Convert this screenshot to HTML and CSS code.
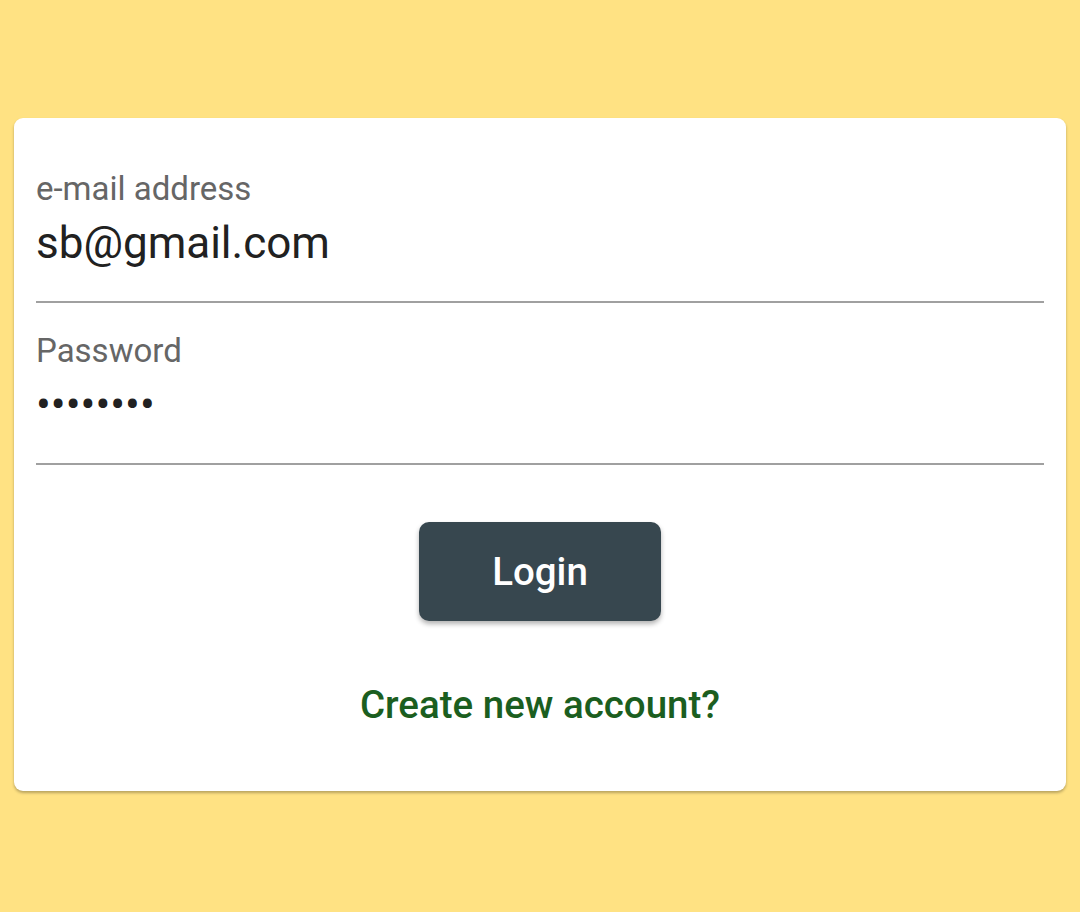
FILE: index.html
```html
<!DOCTYPE html>
<html lang="en">
<head>
<meta charset="utf-8">
<title>Login</title>
<link rel="stylesheet" href="styles.css">
</head>
<body>
<main class="card">
  <label class="field">
    <span class="field-label">e-mail address</span>
    <input class="field-input" type="email" value="sb@gmail.com">
  </label>
  <label class="field">
    <span class="field-label">Password</span>
    <input class="field-input password" type="password" value="password">
  </label>
  <div class="actions">
    <button class="login-btn" type="button">Login</button>
    <a class="create-link" href="#">Create new account?</a>
  </div>
</main>
</body>
</html>
```
FILE: styles.css
```css
html, body {
  margin: 0;
  padding: 0;
}
body {
  background: #FFE283;
  font-family: Roboto, "Noto Sans", sans-serif;
  padding: 118px 14px 0;
  min-height: 912px;
  box-sizing: border-box;
}
.card {
  background: #ffffff;
  border-radius: 9px;
  box-shadow: 0 2px 3px rgba(0, 0, 0, 0.28);
  padding: 23px 22px 62px;
  display: flex;
  flex-direction: column;
}
.field {
  display: flex;
  flex-direction: column;
  padding-top: 28px;
  padding-bottom: 24px;
  border-bottom: 2px solid #a0a0a0;
}
.field-label {
  font-size: 33px;
  line-height: 40px;
  color: #666666;
}
.field-input {
  font-family: Roboto, "Noto Sans", sans-serif;
  font-size: 44px;
  line-height: 68px;
  height: 68px;
  color: #212121;
  border: none;
  outline: none;
  padding: 0;
  margin: 0;
  background: transparent;
  width: 100%;
}
.actions {
  display: flex;
  flex-direction: column;
  align-items: center;
}
.login-btn {
  margin-top: 57px;
  width: 242px;
  height: 99px;
  border: none;
  border-radius: 10px;
  background: #37474F;
  color: #ffffff;
  font-family: Roboto, "Noto Sans", sans-serif;
  font-weight: 500;
  font-size: 38.5px;
  box-shadow: 0 3px 5px rgba(0, 0, 0, 0.3);
  padding: 0;
}
.create-link {
  margin-top: 60px;
  font-size: 38.5px;
  line-height: 48px;
  font-weight: 500;
  color: #1B5E20;
  text-decoration: none;
}
```
